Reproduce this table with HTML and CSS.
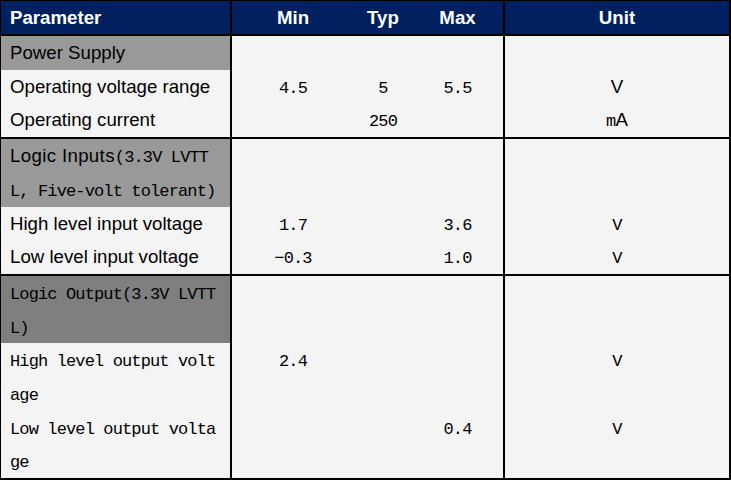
FILE: index.html
```html
<!DOCTYPE html>
<html lang="en">
<head>
<meta charset="utf-8">
<title>Parameters</title>
<link rel="stylesheet" href="styles.css">
</head>
<body>
<table class="spec">
  <thead>
    <tr>
      <th class="c-param">Parameter</th>
      <th class="c-min">Min</th>
      <th class="c-typ">Typ</th>
      <th class="c-max">Max</th>
      <th class="c-unit">Unit</th>
    </tr>
  </thead>
  <tbody>
    <tr>
      <td class="param section">Power Supply</td>
      <td></td><td></td><td class="max"></td><td></td>
    </tr>
    <tr>
      <td class="param">Operating voltage range</td>
      <td class="num"><span class="mono">4.5</span></td>
      <td class="num"><span class="mono">5</span></td>
      <td class="num max"><span class="mono">5.5</span></td>
      <td class="num">V</td>
    </tr>
    <tr>
      <td class="param">Operating current</td>
      <td></td>
      <td class="num"><span class="mono">250</span></td>
      <td class="max"></td>
      <td class="num"><span class="mono">m</span>A</td>
    </tr>
  </tbody>
  <tbody>
    <tr>
      <td class="param section wrap"><span class="sans-label">Logic Inputs</span><span class="mono">(3.3V LVTT</span><span class="mono">L, Five-volt tolerant)</span></td>
      <td></td><td></td><td class="max"></td><td></td>
    </tr>
    <tr>
      <td class="param">High level input voltage</td>
      <td class="num"><span class="mono">1.7</span></td>
      <td></td>
      <td class="num max"><span class="mono">3.6</span></td>
      <td class="num"><span class="mono">V</span></td>
    </tr>
    <tr>
      <td class="param">Low level input voltage</td>
      <td class="num"><span class="mono">−0.3</span></td>
      <td></td>
      <td class="num max"><span class="mono">1.0</span></td>
      <td class="num"><span class="mono">V</span></td>
    </tr>
  </tbody>
  <tbody>
    <tr>
      <td class="param section dark wrap"><span class="mono">Logic Output(3.3V LVTTL)</span></td>
      <td></td><td></td><td class="max"></td><td></td>
    </tr>
    <tr>
      <td class="param wrap"><span class="mono">High level output voltage</span></td>
      <td class="num"><span class="mono">2.4</span></td>
      <td></td>
      <td class="max"></td>
      <td class="num"><span class="mono">V</span></td>
    </tr>
    <tr>
      <td class="param wrap"><span class="mono">Low level output voltage</span></td>
      <td></td>
      <td></td>
      <td class="num max"><span class="mono">0.4</span></td>
      <td class="num"><span class="mono">V</span></td>
    </tr>
  </tbody>
</table>
</body>
</html>
```
FILE: styles.css
```css
html, body {
  margin: 0;
  padding: 0;
  background: #f4f4f4;
}

.spec {
  width: 731px;
  table-layout: fixed;
  border-collapse: separate;
  border-spacing: 0;
  border-style: solid;
  border-color: #000;
  border-width: 1px 2px 2px 1px;
  background: #f4f4f4;
  font-family: "Liberation Sans", Arial, sans-serif;
  font-size: 18.67px;
  color: #000;
}

.spec th,
.spec td {
  box-sizing: border-box;
  padding: 0;
}

.spec th {
  background: #002060;
  color: #fff;
  font-weight: bold;
  line-height: 33px;
  text-align: center;
  border-bottom: 2px solid #000;
}

.spec th.c-param {
  width: 231px;
  text-align: left;
  padding-left: 9px;
  border-right: 2px solid #000;
}
.spec th.c-min { width: 122px; }
.spec th.c-typ { width: 58px; }
.spec th.c-max { width: 93px; border-right: 2px solid #000; }
.spec th.c-unit { width: 224px; }

.spec td {
  line-height: 33.7px;
  vertical-align: top;
}

.spec tbody + tbody tr:first-child td {
  border-top: 2px solid #000;
}

.param {
  padding-left: 9px !important;
  border-right: 2px solid #000;
  text-align: left;
}

.max {
  border-right: 2px solid #000;
}

.num {
  text-align: center;
}

.section {
  background: #999999;
}

.section.dark {
  background: #7f7f7f;
}

.wrap {
  word-break: break-all;
  padding-right: 14px !important;
}

.mono {
  font-family: "Liberation Mono", "DejaVu Sans Mono", monospace;
  font-size: 17px;
  letter-spacing: -0.87px;
  line-height: 17px;
}

.sans-label {
  letter-spacing: 0.35px;
}
```
